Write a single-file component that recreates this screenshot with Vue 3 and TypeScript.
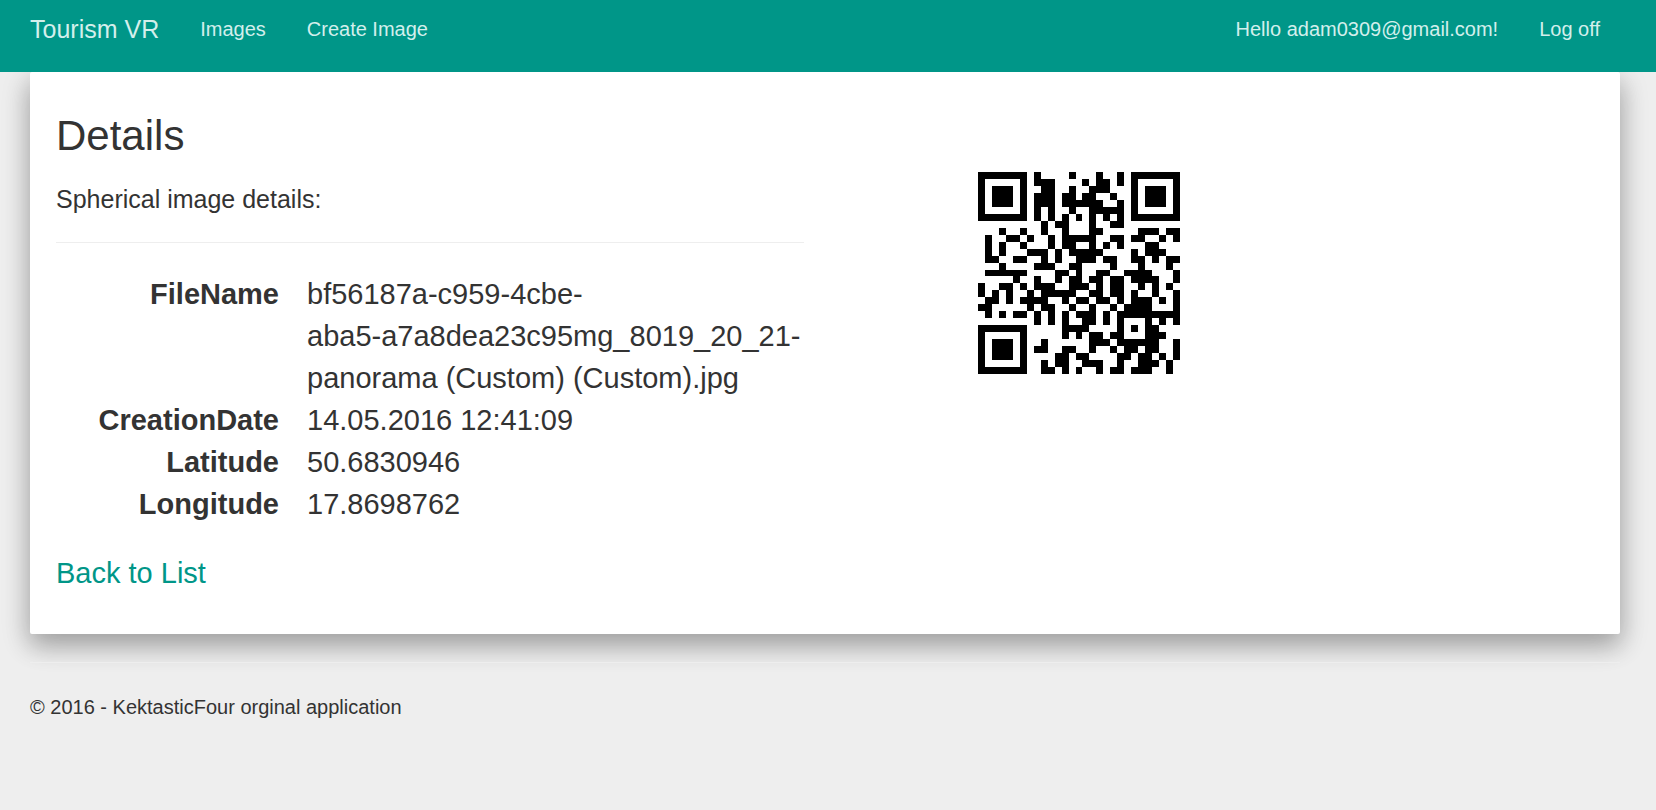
<script setup lang="ts">
import { computed } from 'vue'

interface Detail {
  label: string
  value: string
}

const details: Detail[] = [
  { label: 'FileName', value: 'bf56187a-c959-4cbe-\naba5-a7a8dea23c95mg_8019_20_21-\npanorama (Custom) (Custom).jpg' },
  { label: 'CreationDate', value: '14.05.2016 12:41:09' },
  { label: 'Latitude', value: '50.6830946' },
  { label: 'Longitude', value: '17.8698762' },
]

const QR_SIZE = 29

// Dark modules per row, finder patterns excluded
const modules: number[][] = [
  [8, 13, 17, 20],
  [8, 9, 10, 15, 17, 18, 20],
  [9, 10, 13, 16, 17, 18],
  [8, 9, 10, 12, 13, 15, 16, 19],
  [8, 9, 10, 12, 13, 14, 15, 16, 17, 20],
  [8, 10, 13, 16, 17, 18, 19, 20],
  [8, 10, 12, 14, 16, 18, 20],
  [9, 11, 12, 16, 19, 20],
  [3, 6, 9, 12, 16, 17, 23, 24, 25, 27, 28],
  [1, 4, 5, 7, 10, 12, 13, 14, 15, 16, 19, 20, 22, 23, 26, 28],
  [1, 3, 6, 10, 12, 13, 16, 18, 20, 24, 25],
  [1, 3, 7, 8, 9, 11, 13, 14, 15, 16, 17, 22, 24, 25, 26],
  [1, 2, 5, 6, 9, 11, 14, 15, 16, 18, 19, 22, 23, 25, 27, 28],
  [3, 8, 9, 10, 13, 14, 19, 23, 27],
  [1, 2, 3, 4, 5, 6, 11, 12, 14, 17, 18, 21, 22, 23, 24, 28],
  [5, 8, 11, 13, 14, 16, 17, 19, 20, 22, 23, 24, 25, 28],
  [0, 3, 4, 6, 8, 9, 10, 13, 14, 15, 17, 19, 20, 23, 25, 27],
  [0, 2, 4, 7, 9, 10, 11, 12, 13, 16, 17, 19, 20, 22, 25, 28],
  [1, 2, 4, 6, 7, 8, 9, 12, 14, 15, 17, 18, 20, 22, 23, 24, 26, 28],
  [0, 1, 7, 9, 10, 13, 16, 19, 21, 22, 23, 24, 28],
  [1, 3, 5, 6, 8, 10, 12, 14, 15, 16, 18, 20, 21, 22, 23, 24, 25, 26, 27, 28],
  [8, 10, 12, 15, 16, 18, 20, 24, 26, 28],
  [12, 13, 14, 15, 20, 22, 24, 25],
  [12, 14, 16, 17, 19, 20, 24, 25, 26],
  [9, 16, 17, 18, 20, 21, 22, 23, 24, 25, 28],
  [8, 9, 12, 13, 16, 19, 21, 22, 24, 25, 28],
  [11, 12, 14, 15, 20, 21, 23, 24, 26, 28],
  [9, 11, 12, 15, 16, 17, 20, 23, 24, 25, 27],
  [9, 10, 12, 14, 17, 19, 20, 22, 23, 24, 27],
]

const finders: [number, number][] = [[0, 0], [22, 0], [0, 22]]

const qrPath = computed<string>(() => {
  const cells = modules.flatMap((row, y) => row.map((x) => `M${x} ${y}h1v1h-1z`))
  const corners = finders.map(
    ([x, y]) => `M${x} ${y}h7v7h-7zM${x + 1} ${y + 1}v5h5v-5zM${x + 2} ${y + 2}h3v3h-3z`,
  )
  return [...cells, ...corners].join('')
})
</script>

<template>
  <div class="page">
    <nav class="navbar">
      <a class="brand" href="#">Tourism VR</a>
      <a href="#">Images</a>
      <a href="#">Create Image</a>
      <a class="push" href="#">Hello adam0309@gmail.com!</a>
      <a href="#">Log off</a>
    </nav>

    <main class="card">
      <section class="info">
        <h2>Details</h2>
        <h4>Spherical image details:</h4>
        <hr />
        <dl>
          <template v-for="item in details" :key="item.label">
            <dt>{{ item.label }}</dt>
            <dd>{{ item.value }}</dd>
          </template>
        </dl>
        <p><a href="#">Back to List</a></p>
      </section>
      <section class="code">
        <svg :viewBox="`0 0 ${QR_SIZE} ${QR_SIZE}`" role="img" aria-label="QR code" shape-rendering="crispEdges">
          <path :d="qrPath" />
        </svg>
      </section>
    </main>

    <footer>
      <hr />
      <p>© 2016 - KektasticFour orginal application</p>
    </footer>
  </div>
</template>

<style>
body {
  margin: 0;
  background: #eeeeee;
}
</style>

<style scoped>
.page {
  font-family: "Liberation Sans", Arial, sans-serif;
  font-size: 20px;
  line-height: 28px;
  color: #333333;
}

.navbar {
  position: relative;
  z-index: 1;
  display: flex;
  align-items: flex-start;
  gap: 41px;
  height: 72px;
  box-sizing: border-box;
  padding: 15px 56px 0 30px;
  background: #009688;
}

.navbar a {
  color: #d3efec;
  text-decoration: none;
}

.navbar .brand {
  font-size: 25px;
}

.navbar .push {
  margin-left: auto;
}

.card {
  display: grid;
  grid-template-columns: 1fr 1fr;
  margin: 0 36px 0 30px;
  padding: 41px 0 40px;
  background: #ffffff;
  border-radius: 2px;
  box-shadow: 0 12px 25px rgba(0, 0, 0, 0.2), 0 9px 30px rgba(0, 0, 0, 0.19);
}

.info {
  min-width: 0;
  padding: 0 21px 0 26px;
}

h2,
h4,
p,
dl,
dd {
  margin: 0;
  font-weight: 400;
}

h2 {
  font-size: 42px;
  line-height: 46px;
}

h4 {
  margin-top: 26px;
  font-size: 25px;
  line-height: 28px;
}

hr {
  height: 1px;
  margin: 0;
  border: 0;
  background: #eeeeee;
}

.info hr {
  margin: 29px 0 30px;
}

dl {
  display: grid;
  grid-template-columns: 223px 1fr;
  column-gap: 28px;
  font-size: 29px;
  line-height: 42px;
}

dt {
  font-weight: 700;
  text-align: right;
}

dd {
  white-space: pre-line;
}

.info p {
  margin-top: 27px;
  font-size: 29px;
  line-height: 42px;
}

.info a {
  color: #009688;
  text-decoration: none;
}

.code {
  padding: 59px 0 0 153px;
}

.code svg {
  display: block;
  width: 202px;
  height: 202px;
}

footer {
  position: relative;
  margin: 28px 36px 0 30px;
}

footer p {
  margin-top: 30px;
}
</style>
